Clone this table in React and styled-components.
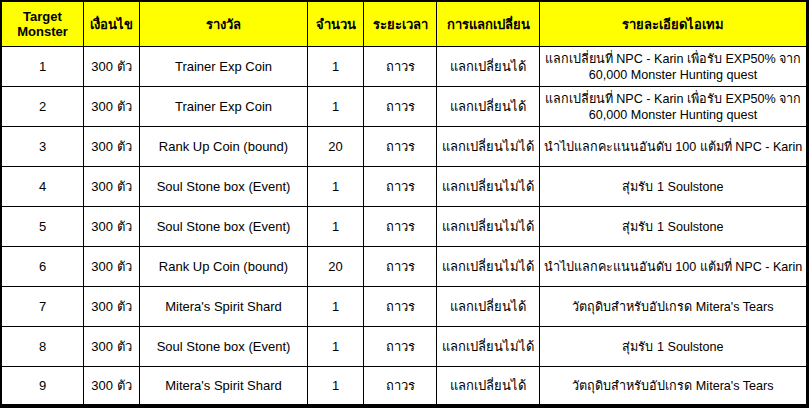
import React from 'react';
import styled, { createGlobalStyle } from 'styled-components';

const GlobalStyle = createGlobalStyle`
    html, body {
        margin: 0;
        padding: 0;
        background: #000;
    }
    body {
        font-family: Tahoma, "Liberation Sans", "DejaVu Sans", "Noto Sans", sans-serif;
    }
`;

const columns = ['Target\nMonster', 'เงื่อนไข', 'รางวัล', 'จำนวน', 'ระยะเวลา', 'การแลกเปลี่ยน', 'รายละเอียดไอเทม'];

const expNote = 'แลกเปลี่ยนที่ NPC - Karin เพื่อรับ EXP50% จาก\n60,000 Monster Hunting quest';
const rankNote = 'นำไปแลกคะแนนอันดับ 100 แต้มที่ NPC - Karin';
const soulNote = 'สุ่มรับ 1 Soulstone';
const shardNote = 'วัตถุดิบสำหรับอัปเกรด Mitera\'s Tears';

const rows = [
    { id: 1, reward: 'Trainer Exp Coin', amount: 1, trade: 'แลกเปลี่ยนได้', note: expNote },
    { id: 2, reward: 'Trainer Exp Coin', amount: 1, trade: 'แลกเปลี่ยนได้', note: expNote },
    { id: 3, reward: 'Rank Up Coin (bound)', amount: 20, trade: 'แลกเปลี่ยนไม่ได้', note: rankNote },
    { id: 4, reward: 'Soul Stone box (Event)', amount: 1, trade: 'แลกเปลี่ยนไม่ได้', note: soulNote },
    { id: 5, reward: 'Soul Stone box (Event)', amount: 1, trade: 'แลกเปลี่ยนไม่ได้', note: soulNote },
    { id: 6, reward: 'Rank Up Coin (bound)', amount: 20, trade: 'แลกเปลี่ยนไม่ได้', note: rankNote },
    { id: 7, reward: "Mitera's Spirit Shard", amount: 1, trade: 'แลกเปลี่ยนได้', note: shardNote },
    { id: 8, reward: 'Soul Stone box (Event)', amount: 1, trade: 'แลกเปลี่ยนไม่ได้', note: soulNote },
    { id: 9, reward: "Mitera's Spirit Shard", amount: 1, trade: 'แลกเปลี่ยนได้', note: shardNote },
];

const App = () => {
    return (
        <>
            <GlobalStyle />
            <Table>
                {columns.map((c) => (
                    <HeadCell key={c}>{c}</HeadCell>
                ))}
                {rows.map((r) => (
                    <React.Fragment key={r.id}>
                        <Cell>{r.id}</Cell>
                        <Cell>300 ตัว</Cell>
                        <Cell>{r.reward}</Cell>
                        <Cell>{r.amount}</Cell>
                        <Cell>ถาวร</Cell>
                        <Cell>{r.trade}</Cell>
                        <Cell $note>{r.note}</Cell>
                    </React.Fragment>
                ))}
            </Table>
        </>
    );
};

export default App;

const Table = styled.div`
    box-sizing: border-box;
    width: 809px;
    height: 408px;
    padding: 2px 3px 4px 2px;
    background: #000;
    display: grid;
    grid-template-columns: 81px 55px 167px 55px 72px 102px 266px;
    grid-template-rows: 44px repeat(8, 39px) 1fr;
    gap: 1px;
`;

const HeadCell = styled.div`
    background: #ffff00;
    color: #000;
    font-weight: bold;
    font-size: 13px;
    line-height: 15px;
    display: flex;
    align-items: center;
    justify-content: center;
    text-align: center;
    white-space: pre-line;
`;

const Cell = styled.div`
    background: #fff;
    color: #000;
    font-size: ${(p) => (p.$note ? '12.6px' : '13px')};
    line-height: 16px;
    display: flex;
    align-items: center;
    justify-content: center;
    text-align: center;
    white-space: pre-line;
    overflow: hidden;
`;
